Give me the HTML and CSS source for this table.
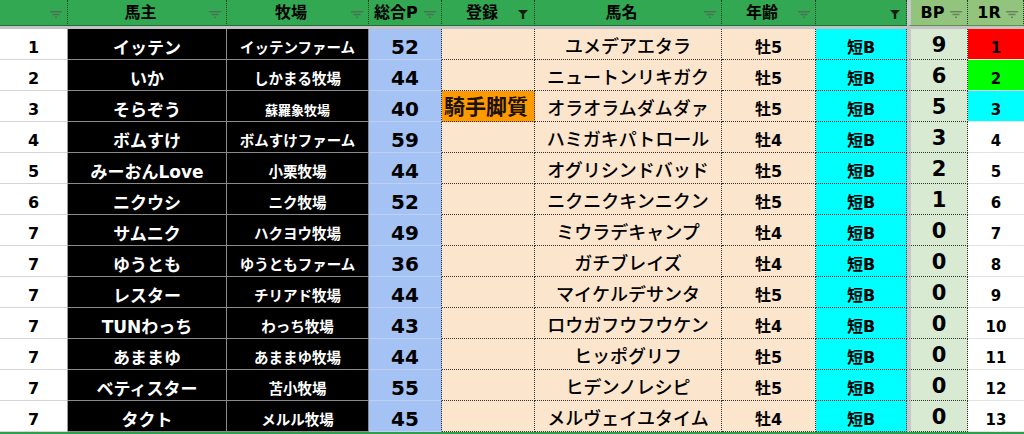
FILE: index.html
```html
<!DOCTYPE html>
<html lang="ja">
<head>
<meta charset="utf-8">
<title>BP</title>
<link rel="stylesheet" href="styles.css">
</head>
<body>
<div class="sheet">
  <div class="h"><span class="lbl"></span><svg class="fi" viewBox="0 0 12 8"><rect x="0" y="0" width="12" height="1.4"/><rect x="2.5" y="2.8" width="7" height="1.4"/><rect x="5" y="5.6" width="2" height="1.4"/></svg></div>
  <div class="h"><span class="lbl">馬主</span><svg class="fi" viewBox="0 0 12 8"><rect x="0" y="0" width="12" height="1.4"/><rect x="2.5" y="2.8" width="7" height="1.4"/><rect x="5" y="5.6" width="2" height="1.4"/></svg></div>
  <div class="h"><span class="lbl">牧場</span><svg class="fi" viewBox="0 0 12 8"><rect x="0" y="0" width="12" height="1.4"/><rect x="2.5" y="2.8" width="7" height="1.4"/><rect x="5" y="5.6" width="2" height="1.4"/></svg></div>
  <div class="h h-pts"><span class="lbl">総合P</span><svg class="fi" viewBox="0 0 12 8"><rect x="0" y="0" width="12" height="1.4"/><rect x="2.5" y="2.8" width="7" height="1.4"/><rect x="5" y="5.6" width="2" height="1.4"/></svg></div>
  <div class="h"><span class="lbl">登録</span><svg class="fa" viewBox="0 0 10 9"><path d="M0 0H10L6.2 4V9H3.8V4Z"/></svg></div>
  <div class="h"><span class="lbl">馬名</span><svg class="fi" viewBox="0 0 12 8"><rect x="0" y="0" width="12" height="1.4"/><rect x="2.5" y="2.8" width="7" height="1.4"/><rect x="5" y="5.6" width="2" height="1.4"/></svg></div>
  <div class="h"><span class="lbl">年齢</span><svg class="fi" viewBox="0 0 12 8"><rect x="0" y="0" width="12" height="1.4"/><rect x="2.5" y="2.8" width="7" height="1.4"/><rect x="5" y="5.6" width="2" height="1.4"/></svg></div>
  <div class="h"><span class="lbl"></span><svg class="fa" viewBox="0 0 10 9"><path d="M0 0H10L6.2 4V9H3.8V4Z"/></svg></div>
  <div class="h h-lt h-bp"><span class="lbl">BP</span><svg class="fi" viewBox="0 0 12 8"><rect x="0" y="0" width="12" height="1.4"/><rect x="2.5" y="2.8" width="7" height="1.4"/><rect x="5" y="5.6" width="2" height="1.4"/></svg></div>
  <div class="h h-lt"><span class="lbl">1R</span><svg class="fi" viewBox="0 0 12 8"><rect x="0" y="0" width="12" height="1.4"/><rect x="2.5" y="2.8" width="7" height="1.4"/><rect x="5" y="5.6" width="2" height="1.4"/></svg></div>
  <div class="band"></div>

  <div class="c rank">1</div><div class="c owner">イッテン</div><div class="c farm">イッテンファーム</div><div class="c pts">52</div><div class="c reg"></div><div class="c horse">ユメデアエタラ</div><div class="c age">牡5</div><div class="c type">短B</div><div class="c bp">9</div><div class="c r1 red">1</div>
  <div class="c rank">2</div><div class="c owner">いか</div><div class="c farm">しかまる牧場</div><div class="c pts">44</div><div class="c reg"></div><div class="c horse">ニュートンリキガク</div><div class="c age">牡5</div><div class="c type">短B</div><div class="c bp">6</div><div class="c r1 green">2</div>
  <div class="c rank">3</div><div class="c owner">そらぞう</div><div class="c farm small">蘇羅象牧場</div><div class="c pts">40</div><div class="c reg jockey">騎手脚質</div><div class="c horse">オラオラムダムダァ</div><div class="c age">牡5</div><div class="c type">短B</div><div class="c bp">5</div><div class="c r1 cyan">3</div>
  <div class="c rank">4</div><div class="c owner">ボムすけ</div><div class="c farm">ボムすけファーム</div><div class="c pts">59</div><div class="c reg"></div><div class="c horse">ハミガキパトロール</div><div class="c age">牡4</div><div class="c type">短B</div><div class="c bp">3</div><div class="c r1">4</div>
  <div class="c rank">5</div><div class="c owner">みーおんLove</div><div class="c farm">小栗牧場</div><div class="c pts">44</div><div class="c reg"></div><div class="c horse">オグリシンドバッド</div><div class="c age">牡5</div><div class="c type">短B</div><div class="c bp">2</div><div class="c r1">5</div>
  <div class="c rank">6</div><div class="c owner">ニクウシ</div><div class="c farm">ニク牧場</div><div class="c pts">52</div><div class="c reg"></div><div class="c horse">ニクニクキンニクン</div><div class="c age">牡5</div><div class="c type">短B</div><div class="c bp">1</div><div class="c r1">6</div>
  <div class="c rank">7</div><div class="c owner">サムニク</div><div class="c farm">ハクヨウ牧場</div><div class="c pts">49</div><div class="c reg"></div><div class="c horse">ミウラデキャンプ</div><div class="c age">牡4</div><div class="c type">短B</div><div class="c bp">0</div><div class="c r1">7</div>
  <div class="c rank">7</div><div class="c owner">ゆうとも</div><div class="c farm">ゆうともファーム</div><div class="c pts">36</div><div class="c reg"></div><div class="c horse">ガチブレイズ</div><div class="c age">牡4</div><div class="c type">短B</div><div class="c bp">0</div><div class="c r1">8</div>
  <div class="c rank">7</div><div class="c owner">レスター</div><div class="c farm">チリアド牧場</div><div class="c pts">44</div><div class="c reg"></div><div class="c horse">マイケルデサンタ</div><div class="c age">牡5</div><div class="c type">短B</div><div class="c bp">0</div><div class="c r1">9</div>
  <div class="c rank">7</div><div class="c owner">TUNわっち</div><div class="c farm">わっち牧場</div><div class="c pts">43</div><div class="c reg"></div><div class="c horse">ロウガフウフウケン</div><div class="c age">牡4</div><div class="c type">短B</div><div class="c bp">0</div><div class="c r1">10</div>
  <div class="c rank">7</div><div class="c owner">あままゆ</div><div class="c farm">あままゆ牧場</div><div class="c pts">44</div><div class="c reg"></div><div class="c horse">ヒッポグリフ</div><div class="c age">牡5</div><div class="c type">短B</div><div class="c bp">0</div><div class="c r1">11</div>
  <div class="c rank">7</div><div class="c owner">ベティスター</div><div class="c farm">苫小牧場</div><div class="c pts">55</div><div class="c reg"></div><div class="c horse">ヒデンノレシピ</div><div class="c age">牡5</div><div class="c type">短B</div><div class="c bp">0</div><div class="c r1">12</div>
  <div class="c rank">7</div><div class="c owner">タクト</div><div class="c farm">メルル牧場</div><div class="c pts">45</div><div class="c reg"></div><div class="c horse">メルヴェイユタイム</div><div class="c age">牡4</div><div class="c type">短B</div><div class="c bp">0</div><div class="c r1">13</div>
  <div class="foot"></div>
</div>
</body>
</html>
```

FILE: styles.css
```css
* { box-sizing: border-box; }
html, body { margin: 0; padding: 0; background: #ffffff; }
body {
  font-family: "DejaVu Sans", "Noto Sans CJK JP", sans-serif;
  color: #000;
  overflow: hidden;
}
.sheet {
  width: 1024px;
  height: 434px;
  display: grid;
  grid-template-columns: 68px 159px 142px 73px 93px 187px 94px 91px 61px 56px;
  grid-template-rows: 26px 3px repeat(13, 31px) 2px;
}
.h {
  background: #33a853;
  border-right: 1px dotted #1b3d24;
  border-bottom: 1px solid #1f6e37;
  display: flex;
  align-items: center;
  font-weight: bold;
  font-size: 16px;
  line-height: 1;
}
.h .lbl { flex: 1; text-align: center; padding-left: 4px; }
.h-pts .lbl { text-align: left; padding-left: 5px; }
.h-lt { background: #93c47d; border-bottom-color: #5f8f4c; }
.h-bp { border-left: 4px solid #c8c8c8; }
.fi { width: 12px; height: 8px; margin: 4px 5px 0 0; fill: #4e6e56; }
.h-lt .fi { fill: #67805c; }
.fa { width: 10px; height: 9px; margin: 3px 6px 0 0; fill: #0f1f14; }
.band { grid-column: 1 / -1; background: #c3c3c3; }
.foot { grid-column: 1 / -1; background: #2f9e4c; }

.c {
  display: flex;
  align-items: center;
  justify-content: center;
  padding-top: 8px;
  font-weight: bold;
  line-height: 1;
  white-space: nowrap;
  border-right: 1px dotted #333;
  border-bottom: 1px dotted #333;
}
.rank {
  background: #fff;
  font-size: 16px;
  border-right: 1px solid #9a9a9a;
  border-bottom: 1px solid #d4d4d4;
}
.owner, .farm {
  background: #000;
  color: #fff;
  border-right: 1px solid #8a8a8a;
  border-bottom: 1px solid #8a8a8a;
}
.owner { font-size: 17px; }
.farm { font-size: 14.5px; }
.farm.small { font-size: 13px; }
.pts {
  background: #a4c2f4;
  font-size: 20px;
  padding-top: 5px;
  border-right: 1px dotted #333;
  border-bottom: 1px solid #bed0f2;
}
.reg { background: #fce5cd; }
.jockey {
  background: #ff9900;
  font-size: 21px;
  justify-content: flex-start;
  padding-left: 2px;
  padding-top: 3px;
  color: #1a1200;
}
.horse { background: #fce5cd; font-size: 18px; font-weight: 500; padding-top: 6px; }
.age { background: #fce5cd; font-size: 16px; }
.type { background: #00ffff; font-size: 16px; }
.bp {
  background: #d9ead3;
  font-size: 21px;
  padding-top: 3px;
  border-left: 4px solid #c8c8c8;
}
.r1 {
  background: #fff;
  font-size: 15px;
  border-right: none;
  border-bottom: 1px solid #e3e3e3;
}
.r1.red { background: #ff0000; }
.r1.green { background: #00ff00; }
.r1.cyan { background: #00ffff; }
```
